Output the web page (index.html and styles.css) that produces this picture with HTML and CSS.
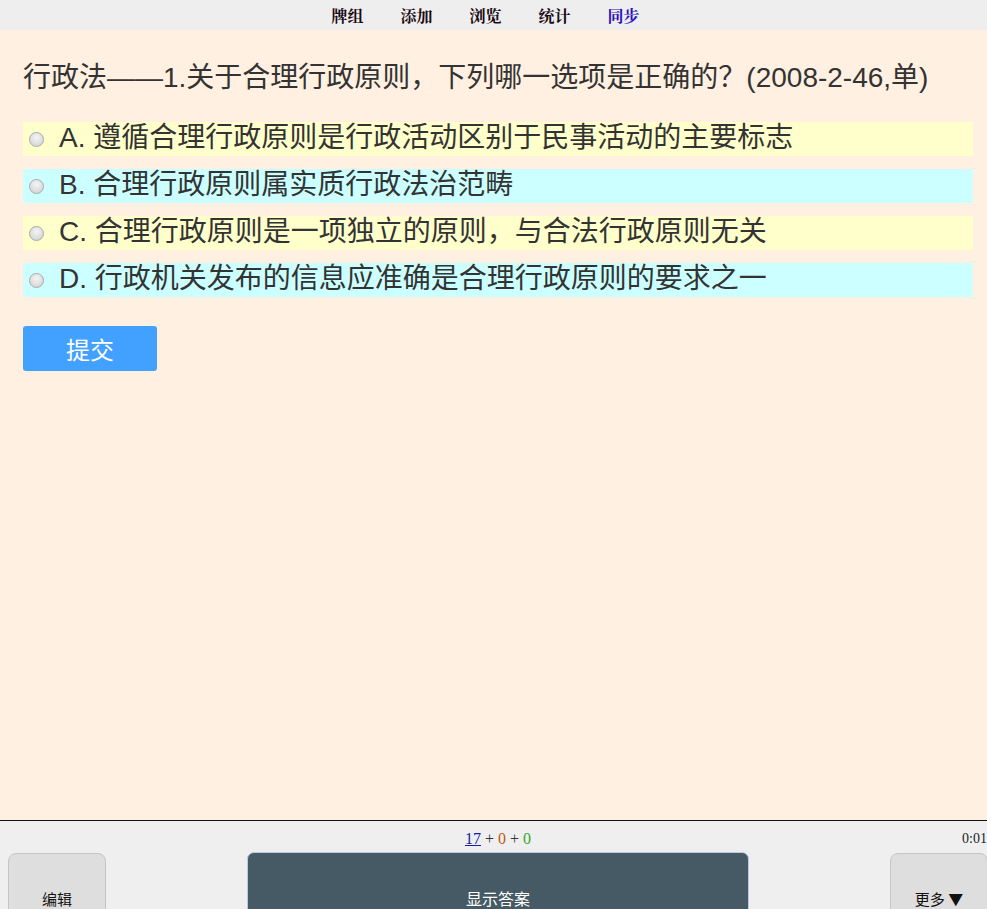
FILE: index.html
```html
<!DOCTYPE html>
<html lang="zh">
<head>
    <meta charset="UTF-8">
    <title>复习</title>
    <link rel="stylesheet" href="styles.css">
</head>
<body>
    <div class="topbar">
        <a class="top-link">牌组</a>
        <a class="top-link">添加</a>
        <a class="top-link">浏览</a>
        <a class="top-link">统计</a>
        <a class="top-link sync">同步</a>
    </div>

    <div class="card">
        <div class="question">行政法——1.关于合理行政原则，下列哪一选项是正确的？(2008-2-46,单)</div>

        <div class="options">
            <label class="option odd"><span class="radio"></span>A. 遵循合理行政原则是行政活动区别于民事活动的主要标志</label>
            <label class="option even"><span class="radio"></span>B. 合理行政原则属实质行政法治范畴</label>
            <label class="option odd"><span class="radio"></span>C. 合理行政原则是一项独立的原则，与合法行政原则无关</label>
            <label class="option even"><span class="radio"></span>D. 行政机关发布的信息应准确是合理行政原则的要求之一</label>
        </div>

        <button class="submit">提交</button>
    </div>

    <div class="bottombar">
        <div class="side">
            <button class="side-btn">编辑</button>
        </div>
        <div class="middle">
            <div class="counts"><u class="new">17</u> + <span class="learn">0</span> + <span class="review">0</span></div>
            <button class="answer-btn">显示答案</button>
        </div>
        <div class="side right">
            <div class="timer">0:01</div>
            <button class="side-btn">更多 ▼</button>
        </div>
    </div>
</body>
</html>
```

FILE: styles.css
```css
* {
    margin: 0;
    padding: 0;
    box-sizing: border-box;
}

body {
    width: 987px;
    height: 909px;
    overflow: hidden;
    background: #efefef;
    font-family: "Liberation Sans", "Noto Sans CJK SC", sans-serif;
}

.topbar {
    height: 30px;
    background: #eeeeee;
    display: flex;
    justify-content: center;
    align-items: center;
    gap: 37px;
    padding-right: 16px;
    font-family: "Liberation Serif", "Noto Serif CJK SC", "Noto Sans CJK SC", serif;
    font-weight: bold;
    font-size: 16px;
}

.top-link {
    color: #1a0a14;
}

.top-link.sync {
    color: #2a10c0;
}

.card {
    height: 790px;
    background: #fff0e1;
    padding: 30px 14px 0 23px;
    color: #333333;
}

.question {
    font-size: 28px;
    line-height: 36px;
    margin-bottom: 26px;
}

.options {
    display: flex;
    flex-direction: column;
    gap: 13px;
}

.option {
    display: flex;
    align-items: center;
    height: 34px;
    font-size: 28px;
    line-height: 30px;
    padding: 0 0 2px 6px;
}

.option.odd {
    background: #ffffcc;
}

.option.even {
    background: #ccffff;
}

.radio {
    width: 15px;
    height: 15px;
    border-radius: 50%;
    border: 1px solid #a9a9a9;
    background: radial-gradient(circle at 50% 35%, #f4f4f4, #cfcfcf);
    margin: 2px 15px 0 0;
    flex-shrink: 0;
}

.submit {
    margin-top: 29px;
    width: 134px;
    height: 45px;
    background: #42a0ff;
    color: #ffffff;
    border: none;
    border-radius: 3px;
    font-family: "Noto Sans CJK SC", sans-serif;
    font-size: 24px;
}

.bottombar {
    height: 89px;
    border-top: 1px solid #111111;
    background: #efefef;
    display: flex;
    font-family: "Liberation Serif", "Noto Sans CJK SC", serif;
    font-size: 14px;
}

.side {
    width: 106px;
    flex-shrink: 0;
    padding: 32px 0 0 8px;
}

.side.right {
    padding: 10px 0 0 9px;
    margin-left: auto;
}

.timer {
    text-align: right;
    margin-bottom: 6px;
    color: #222222;
}

.side-btn {
    width: 98px;
    height: 70px;
    border: 1px solid #c4c4c4;
    border-radius: 8px;
    background: #dedede;
    font-family: "Noto Sans CJK SC", sans-serif;
    font-size: 15px;
    color: #111111;
    padding-top: 20px;
}

.middle {
    flex: 1;
    display: flex;
    flex-direction: column;
    align-items: center;
    padding-top: 9px;
}

.counts {
    height: 22px;
    flex-shrink: 0;
    padding-left: 9px;
    font-size: 16px;
    color: #333333;
}

.new {
    color: #1a1aa6;
}

.learn {
    color: #c35617;
}

.review {
    color: #2fa82f;
}

.answer-btn {
    width: 502px;
    height: 70px;
    flex-shrink: 0;
    margin-left: 9px;
    background: #455a64;
    border: 1px solid #b8cbe0;
    border-radius: 7px;
    color: #ffffff;
    font-family: "Noto Sans CJK SC", sans-serif;
    font-size: 16px;
    padding-top: 21px;
}
```
